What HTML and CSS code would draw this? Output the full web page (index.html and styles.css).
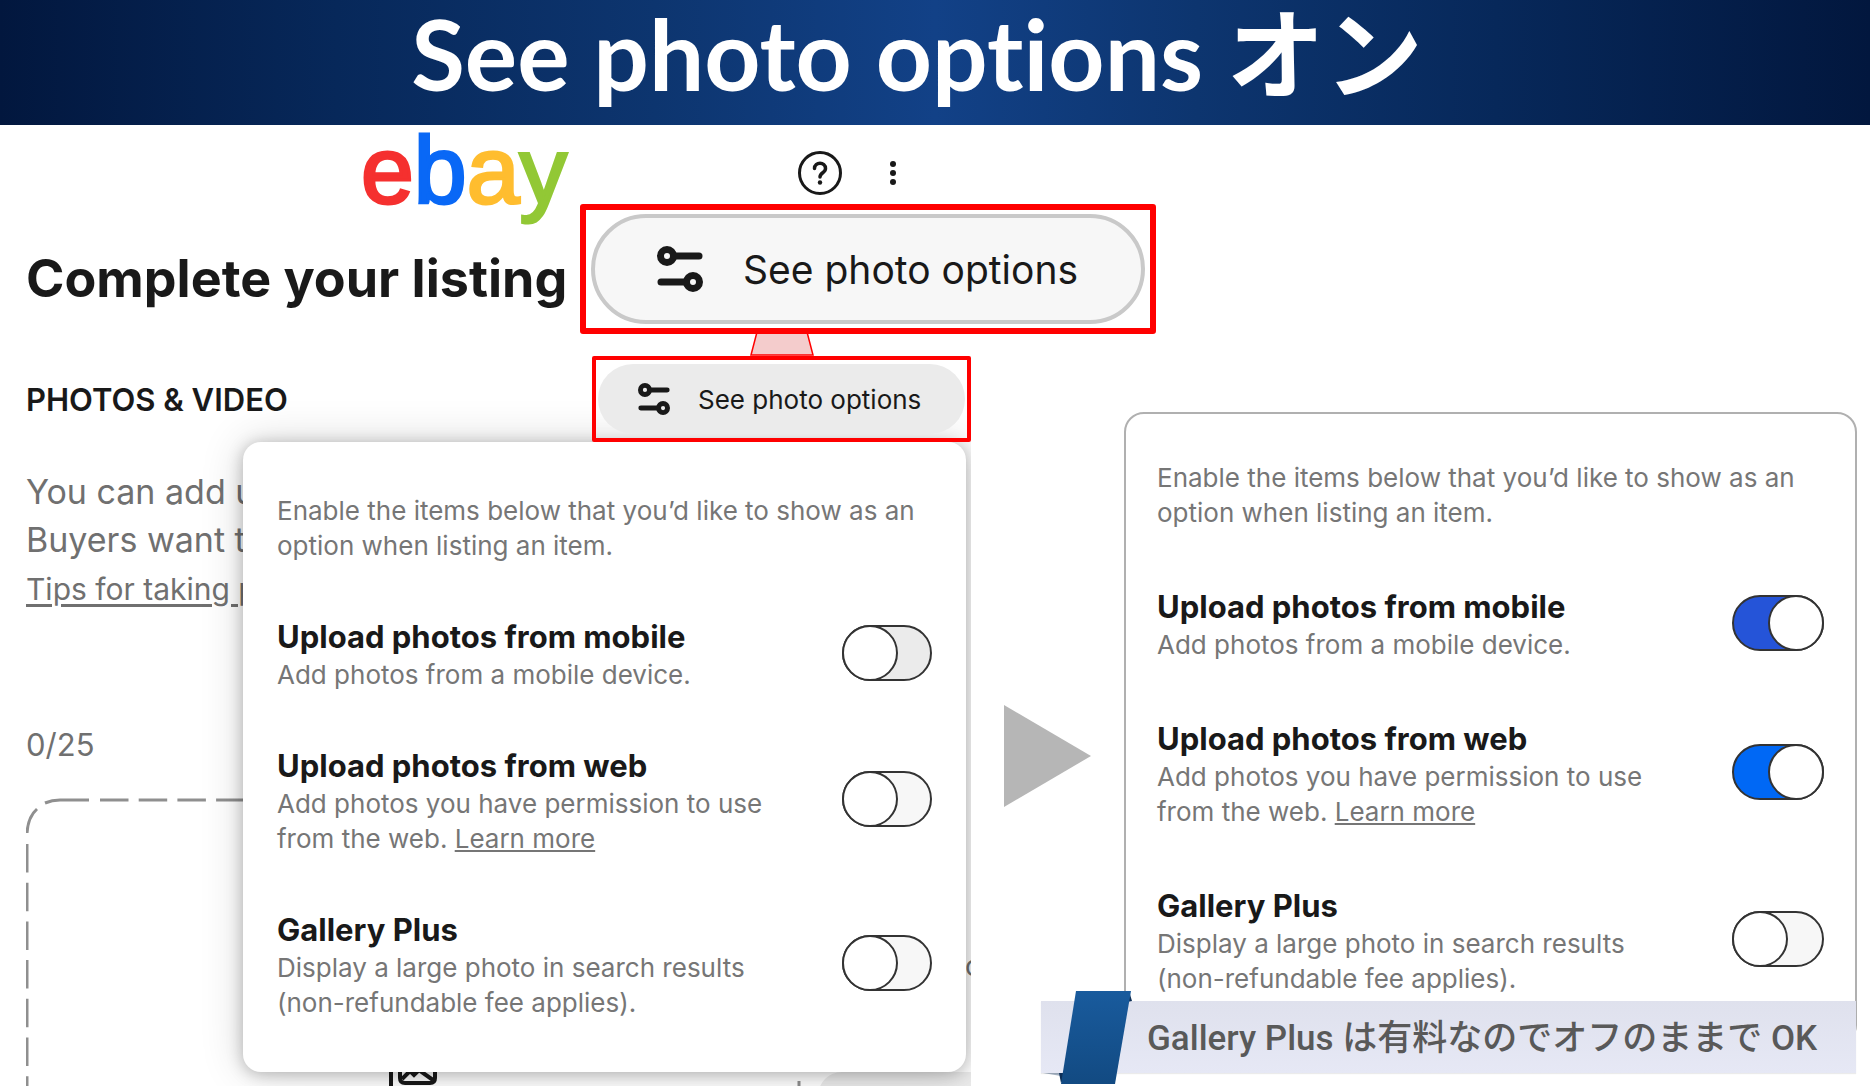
FILE: index.html
```html
<!DOCTYPE html>
<html lang="en">
<head>
<meta charset="utf-8">
<meta name="viewport" content="width=device-width, initial-scale=1">
<title>See photo options</title>
<link rel="stylesheet" href="styles.css">
</head>
<body>
<svg width="0" height="0" class="symbols" aria-hidden="true">
  <symbol id="sliders" viewBox="0 0 46 46">
    <g fill="none" stroke="#191919" stroke-width="7" stroke-linecap="round">
      <circle cx="10" cy="10" r="6.500"/><path d="M18 10h24"/>
      <circle cx="36" cy="36" r="6.500"/><path d="M4 36h24"/>
    </g>
  </symbol>
</svg>

<header class="title-bar"><p class="title-text" lang="ja">See photo options オン</p></header>

<main class="slide">
  <section class="before">
    <div class="topbar">
      <a class="logo" href="#" aria-label="eBay"><span class="logo-e">e</span><span class="logo-b">b</span><span class="logo-a">a</span><span class="logo-y">y</span></a>
      <div class="topbar-actions">
        <button class="icon-button" type="button" aria-label="Help">
          <svg width="46" height="46" viewBox="0 0 46 46" fill="none" stroke="#191919">
            <circle cx="23" cy="23" r="20.500" stroke-width="3"/>
            <path d="M17.500 18.500c0-7 11-7 11 0c0 4.500-5.500 4-5.500 8.500" stroke-width="3.500" stroke-linecap="round"/>
            <circle cx="23" cy="32.500" r="2.200" fill="#191919" stroke="none"/>
          </svg>
        </button>
        <button class="icon-button" type="button" aria-label="More">
          <svg width="8" height="26" viewBox="0 0 8 26" fill="#191919"><circle cx="4" cy="4" r="3"/><circle cx="4" cy="13" r="3"/><circle cx="4" cy="22" r="3"/></svg>
        </button>
      </div>
    </div>

    <h1 class="page-title">Complete your listing</h1>

    <div class="section-row">
      <h2 class="section-title">PHOTOS &amp; VIDEO</h2>
      <div class="options">
        <div class="frame">
          <button class="pill" type="button"><svg class="pill-icon"><use href="#sliders"/></svg>See photo options</button>
        </div>

        <div class="callout">
          <button class="pill pill-large" type="button"><svg class="pill-icon"><use href="#sliders"/></svg>See photo options</button>
        </div>
        <svg class="callout-tail" width="64" height="24" viewBox="0 0 64 24"><path d="M7 0H57L63 23H1Z" fill="#f4cccc" stroke="#f00" stroke-width="1.500"/></svg>

        <div class="panel popup">
          <p class="muted">Enable the items below that you’d like to show as an option when listing an item.</p>
          <div class="item">
            <div class="item-text">
              <label class="item-title" for="b-mobile">Upload photos from mobile</label>
              <p class="muted">Add photos from a mobile device.</p>
            </div>
            <input class="toggle toggle-hover" type="checkbox" id="b-mobile">
          </div>
          <div class="item">
            <div class="item-text">
              <label class="item-title" for="b-web">Upload photos from web</label>
              <p class="muted">Add photos you have permission to use from the web. <a href="#">Learn more</a></p>
            </div>
            <input class="toggle" type="checkbox" id="b-web">
          </div>
          <div class="item">
            <div class="item-text">
              <label class="item-title" for="b-gallery">Gallery Plus</label>
              <p class="muted">Display a large photo in search results (non-refundable fee applies).</p>
            </div>
            <input class="toggle" type="checkbox" id="b-gallery">
          </div>
        </div>
      </div>
    </div>

    <p class="intro">You can add up<br>Buyers want to<br><a class="tips" href="#">Tips for taking photos</a></p>
    <p class="count">0/25</p>

    <svg class="dropzone" width="945" height="289" fill="none" stroke="#8f8f8f" stroke-width="3">
      <path d="M1 35Q2 19 11 11M19 5Q26 2 34 2H63"/>
      <path d="M1 46V300M74 2H740" stroke-dasharray="28.500 10.200"/>
      <path d="M773 283V300"/>
      <rect x="792" y="274" width="400" height="200" rx="24" fill="#ececec" stroke="none"/>
      <g stroke="#191919" stroke-width="4">
        <path d="M365 250V300"/>
        <path d="M374 250V280Q374 285 379 285H404Q409 285 409 280V250"/>
        <path d="M376 281L384 273L388 277L393 272L407 282"/>
      </g>
      <text class="clipped-text" x="939" y="178">c</text>
    </svg>
  </section>

  <div class="arrow"><svg width="87" height="102" viewBox="0 0 87 102"><path d="M0 0L87 51L0 102Z" fill="#b6b6b6"/></svg></div>

  <section class="after">
    <div class="panel card">
      <p class="muted">Enable the items below that you’d like to show as an option when listing an item.</p>
      <div class="item">
        <div class="item-text">
          <label class="item-title" for="a-mobile">Upload photos from mobile</label>
          <p class="muted">Add photos from a mobile device.</p>
        </div>
        <input class="toggle toggle-hover" type="checkbox" id="a-mobile" checked>
      </div>
      <div class="item">
        <div class="item-text">
          <label class="item-title" for="a-web">Upload photos from web</label>
          <p class="muted">Add photos you have permission to use from the web. <a href="#">Learn more</a></p>
        </div>
        <input class="toggle" type="checkbox" id="a-web" checked>
      </div>
      <div class="item">
        <div class="item-text">
          <label class="item-title" for="a-gallery">Gallery Plus</label>
          <p class="muted">Display a large photo in search results (non-refundable fee applies).</p>
        </div>
        <input class="toggle" type="checkbox" id="a-gallery">
      </div>
    </div>
    <div class="note">
      <p class="note-text" lang="ja">Gallery Plus は有料なのでオフのままで OK</p>
      <svg class="ribbon" width="94" height="94" viewBox="0 0 94 94">
        <defs><linearGradient id="blue" x1="0" y1="0" x2="0" y2="1"><stop offset="0" stop-color="#195b9d"/><stop offset="1" stop-color="#124a82"/></linearGradient></defs>
        <path d="M2 82L20 82V85Z" fill="#16385f" opacity=".4"/>
        <path d="M18 82H26L20 92ZM88 0L91 10L86 11Z" fill="#0d2f57"/>
        <path d="M35 0H90L74 93H20Z" fill="url(#blue)"/>
      </svg>
    </div>
  </section>
</main>
</body>
</html>
```
FILE: styles.css
```css
*, *::before { box-sizing: border-box; margin: 0; padding: 0; }

body {
  min-height: 100vh;
  background: #fff;
  color: #191919;
  font-family: Inter, "Liberation Sans", sans-serif;
  overflow: hidden;
}

a { color: inherit; }
button { border: 0; background: none; font: inherit; color: inherit; cursor: pointer; }
.symbols { position: absolute; }

.title-bar {
  display: flex;
  justify-content: center;
  height: 125px;
  padding-right: 36px;
  background: linear-gradient(90deg, #02173e 0%, #07285a 18%, #0d356f 35%, #124187 50%, #0d356f 64%, #07285a 80%, #02173e 100%);
}
.title-text {
  font: 700 98px/107px Lato, "Noto Sans CJK JP", sans-serif;
  font-variant-ligatures: none;
  color: #fff;
  white-space: nowrap;
}

.slide {
  display: grid;
  grid-template-columns: 971fr 153fr 733fr;
  height: calc(100vh - 125px);
  padding-right: 13px;
}

.before { padding-left: 26px; min-width: 0; }

.topbar { display: flex; height: 96px; padding-left: 335px; }
.logo {
  width: 436px;
  font: 95px/90px "Liberation Sans", sans-serif;
  text-decoration: none;
  -webkit-text-stroke: 3px currentColor;
}
.logo-e { color: #f5302f; }
.logo-b { color: #0968f6; }
.logo-a { color: #ffbd2f; }
.logo-y { color: #92c835; }
.topbar-actions { display: flex; align-items: center; gap: 46px; }
.icon-button { display: flex; }

.page-title { margin-top: 26px; font-size: 52px; line-height: 64px; }

.section-row { display: flex; align-items: center; justify-content: space-between; margin-top: 45px; }
.section-title { font-size: 31px; font-weight: 600; }

.options { position: relative; width: 379px; }
.frame {
  position: relative;
  z-index: 2;
  height: 86px;
  padding: 4px 2px;
  border: 4px solid #f00;
  border-radius: 2px;
}
.pill {
  display: flex;
  align-items: center;
  gap: 28px;
  width: 100%;
  height: 70px;
  padding-left: 40px;
  border-radius: 35px;
  background: #ebebeb;
  font-size: 26px;
}
.pill-icon { width: 32px; height: 32px; }

.callout {
  position: absolute;
  z-index: 3;
  left: -12px;
  bottom: calc(100% + 22px);
  width: 576px;
  padding: 4px 5px;
  border: 6px solid #f00;
  border-radius: 3px;
  background: #fff;
}
.pill-large {
  gap: 40px;
  height: 110px;
  padding-left: 62px;
  border: 4px solid #c9c9c9;
  border-radius: 55px;
  background: #f7f7f7;
  font-size: 39px;
}
.pill-large .pill-icon { width: 46px; height: 46px; }
.callout-tail { position: absolute; left: 158px; bottom: 100%; z-index: 1; }

.panel { display: flex; flex-direction: column; background: #fff; }
.popup {
  position: absolute;
  z-index: 1;
  top: 100%;
  right: 5px;
  width: 723px;
  gap: 54px;
  padding: 51px 34px 52px 34px;
  border-radius: 18px;
  box-shadow: 0 2px 16px rgba(0, 0, 0, .25), 0 0 44px rgba(0, 0, 0, .16);
  clip-path: inset(-60px -5px -60px -60px);
}
.card {
  gap: 57px;
  margin-top: 287px;
  padding: 46px 31px 47px 31px;
  border: 2px solid #b0b0b0;
  border-radius: 20px;
}

.muted { font-size: 26px; line-height: 35px; color: #767676; }
.item { display: flex; align-items: center; justify-content: space-between; }
.item-text { width: 510px; }
.item-title { display: block; font-size: 31px; line-height: 40px; font-weight: 700; }

.toggle {
  appearance: none;
  display: flex;
  width: 90px;
  height: 56px;
  margin-bottom: 4px;
  border: 2px solid #333;
  border-radius: 28px;
  background: #f7f7f7;
}
.toggle::before {
  content: "";
  width: 56px;
  height: 56px;
  margin: -2px;
  border: 2px solid #333;
  border-radius: 50%;
  background: #fff;
}
.card .toggle { width: 92px; }
.toggle:checked { justify-content: flex-end; background: #0068f5; }
.toggle-hover { background: #ebebeb; }
.toggle-hover:checked { background: #2554d8; }

.intro { margin-top: 26px; font-size: 34px; line-height: 48px; color: #707070; }
.tips { font-size: 30px; text-underline-offset: 4px; }
.count { margin-top: 112px; font-size: 31px; line-height: 40px; color: #707070; }
.dropzone { display: block; width: 100%; margin-top: 33px; }
.clipped-text { font-size: 28px; fill: #707070; stroke: none; }

.arrow { display: flex; align-items: flex-start; justify-content: center; padding-top: 580px; }

.after { position: relative; }
.note {
  position: absolute;
  top: 876px;
  left: -83px;
  right: 1px;
  height: 72px;
  padding-left: 106px;
  background: linear-gradient(#dfe1ed, #e6e8f5);
  box-shadow: 0 1px 1px rgba(0, 0, 0, .08);
}
.note-text {
  font: 500 35px/76px Roboto, "Noto Sans CJK JP", sans-serif;
  color: #595959;
  white-space: nowrap;
}
.ribbon { position: absolute; left: 0; top: -10px; }
```
